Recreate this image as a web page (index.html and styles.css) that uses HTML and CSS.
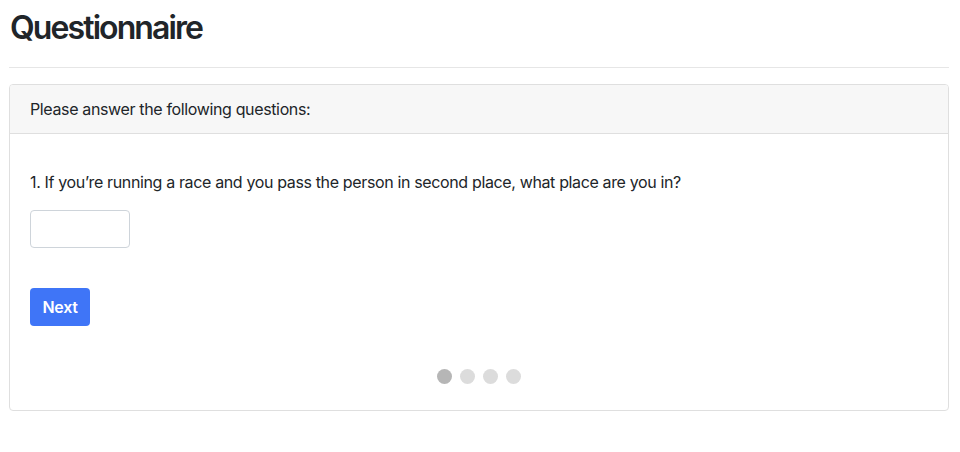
FILE: index.html
```html
<!DOCTYPE html>
<html lang="en">
<head>
<meta charset="utf-8">
<title>Questionnaire</title>
<link rel="stylesheet" href="styles.css">
</head>
<body>
<div class="page">
  <h2 class="title">Questionnaire</h2>
  <hr class="rule">
  <div class="card">
    <div class="card-header">Please answer the following questions:</div>
    <div class="card-body">
      <p class="question">1. If you’re running a race and you pass the person in second place, what place are you in?</p>
      <input class="answer" type="text">
      <div class="actions">
        <button class="btn-next" type="button">Next</button>
      </div>
      <div class="dots">
        <span class="dot active"></span>
        <span class="dot"></span>
        <span class="dot"></span>
        <span class="dot"></span>
      </div>
    </div>
  </div>
</div>
</body>
</html>
```
FILE: styles.css
```css
* { box-sizing: border-box; }
html, body { margin: 0; padding: 0; background: #fff; }
body {
  font-family: Inter, "Noto Sans", "Liberation Sans", sans-serif;
  font-size: 16px;
  line-height: 1.5;
  letter-spacing: -0.36px;
  color: #212529;
}
.page {
  padding: 9px 11px 0 9px;
}
.title {
  margin: 0 0 0 1px;
  font-size: 32px;
  font-weight: 600;
  line-height: 38px;
  letter-spacing: -1.9px;
}
.rule {
  margin: 20px 0 16px 0;
  border: 0;
  border-top: 1px solid #e6e6e6;
  height: 0;
}
.card {
  border: 1px solid #dfdfdf;
  border-radius: 4px;
  background: #fff;
}
.card-header {
  padding: 12px 20px;
  background: #f7f7f7;
  border-bottom: 1px solid #dfdfdf;
  border-radius: 3px 3px 0 0;
}
.card-body {
  padding: 36px 20px 26px;
}
.question {
  margin: 0 0 16px;
}
.answer {
  display: block;
  width: 100px;
  height: 38px;
  border: 1px solid #ced4da;
  border-radius: 4px;
  padding: 6px 12px;
  font: inherit;
}
.actions {
  margin-top: 40px;
}
.btn-next {
  width: 60px;
  height: 38px;
  padding: 0;
  border: 0;
  border-radius: 4px;
  background: #3f75f7;
  color: #fff;
  font: inherit;
  font-weight: 600;
  letter-spacing: -0.3px;
}
.dots {
  margin-top: 43px;
  display: flex;
  justify-content: center;
  gap: 8px;
}
.dot {
  width: 15px;
  height: 15px;
  border-radius: 50%;
  background: #dcdcdc;
}
.dot.active { background: #b6b6b6; }
```
